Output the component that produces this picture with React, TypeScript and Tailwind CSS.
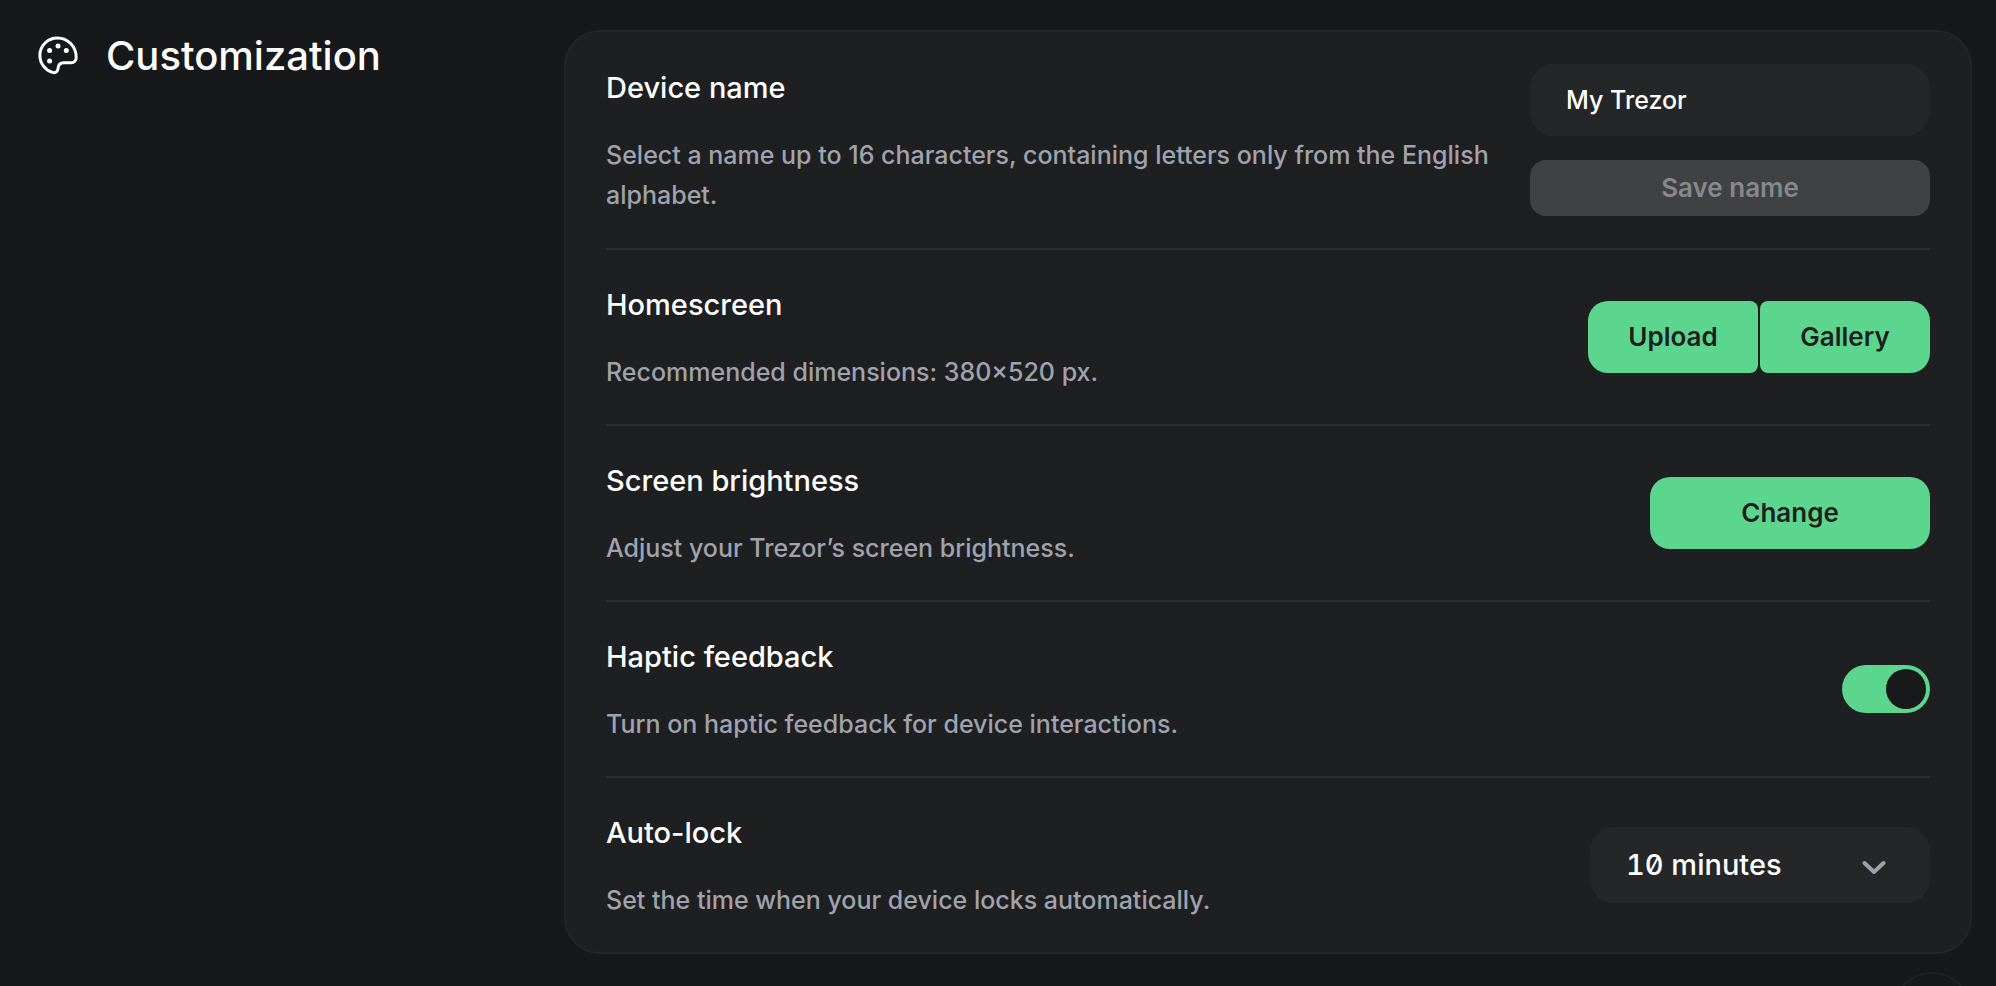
import {useState, type ReactNode} from "react";
import {clsx} from "clsx";

type RowProps = {
  title: string;
  description: string;
  htmlFor?: string;
  children: ReactNode;
};

function SettingRow({title, description, htmlFor, children}: RowProps) {
  return (
    <div className="flex items-center justify-between gap-8 py-8">
      <div className="min-w-0 flex-1">
        <h3 className="text-[29px] leading-[46px] font-medium text-white">
          {htmlFor ? <label htmlFor={htmlFor}>{title}</label> : title}
        </h3>
        <p className="mt-6 text-[25px] leading-10 font-medium text-[#a0a3ad]">{description}</p>
      </div>
      <div className="shrink-0">{children}</div>
    </div>
  );
}

function PaletteIcon() {
  return (
    <svg width="40" height="40" viewBox="0 0 40 40" fill="none" className="shrink-0" aria-hidden="true">
      <path
        d="M19.5 1.9C9.8 1.9 1.9 9.600 1.900 19.200c0 8.300 5.300 15 12.600 17.200 3.300 1 5.300-1 5.500-3.800.2-3.600 1.900-5.900 5.800-5.900h7.400c2.900 0 5-2 5-5.400C38.200 10.300 29.800 1.900 19.500 1.900Z"
        stroke="currentColor"
        strokeWidth="3"
      />
      <circle cx="11.6" cy="14.6" r="2.5" fill="currentColor" />
      <circle cx="20" cy="10" r="2.5" fill="currentColor" />
      <circle cx="28.3" cy="14.6" r="2.5" fill="currentColor" />
      <circle cx="11.6" cy="25" r="2.5" fill="currentColor" />
    </svg>
  );
}

const BUTTON = "h-[72px] bg-[#5cd68e] text-[26px] leading-8 font-semibold text-[#1d1e20] hover:bg-[#6be09b]";
const FIELD = "rounded-3xl bg-[#252628] font-medium text-white outline-none";

export default function App() {
  const [name, setName] = useState("My Trezor");
  const [haptic, setHaptic] = useState(true);
  const [autoLock, setAutoLock] = useState("10 minutes");

  return (
    <main className="relative min-h-screen overflow-hidden bg-[#171819] pt-[30px] pr-6 pb-8 pl-[38px] font-[Inter,sans-serif]">
      <div className="flex items-start">
        <header className="flex w-[526px] shrink-0 items-center gap-7 text-white">
          <PaletteIcon />
          <h2 className="text-[40px] leading-[52px] font-medium">Customization</h2>
        </header>

        <section className="min-w-0 flex-1 divide-y-2 divide-[#2c2d2f] rounded-[36px] border-2 border-[#242527] bg-[#1e1f21] px-10">
          {/* Device name */}
          <SettingRow
            title="Device name"
            description="Select a name up to 16 characters, containing letters only from the English alphabet."
            htmlFor="device-name"
          >
            <div className="flex w-[400px] flex-col gap-6">
              <input
                id="device-name"
                value={name}
                maxLength={16}
                onChange={(e) => setName(e.target.value)}
                className={clsx(FIELD, "h-[72px] w-full px-9 text-[25px]")}
              />
              <button
                disabled={name === "My Trezor"}
                className="h-14 rounded-2xl bg-[#404143] text-[26px] leading-8 font-semibold text-[#87888d]"
              >
                Save name
              </button>
            </div>
          </SettingRow>

          {/* Homescreen */}
          <SettingRow title="Homescreen" description="Recommended dimensions: 380×520 px.">
            <div className="flex gap-0.5">
              <button className={clsx(BUTTON, "w-[170px] rounded-l-[20px] rounded-r-lg")}>Upload</button>
              <button className={clsx(BUTTON, "w-[170px] rounded-l-lg rounded-r-[20px]")}>Gallery</button>
            </div>
          </SettingRow>

          {/* Brightness */}
          <SettingRow title="Screen brightness" description="Adjust your Trezor’s screen brightness.">
            <button className={clsx(BUTTON, "w-[280px] rounded-[20px]")}>Change</button>
          </SettingRow>

          {/* Haptics */}
          <SettingRow
            title="Haptic feedback"
            description="Turn on haptic feedback for device interactions."
            htmlFor="haptic"
          >
            <label
              htmlFor="haptic"
              className={clsx(
                "flex h-12 w-[88px] cursor-pointer items-center rounded-full p-1",
                haptic ? "justify-end bg-[#5cd68e]" : "justify-start bg-[#404143]"
              )}
            >
              <input
                id="haptic"
                type="checkbox"
                role="switch"
                checked={haptic}
                onChange={(e) => setHaptic(e.target.checked)}
                className="size-10 cursor-pointer appearance-none rounded-full bg-[#18191a]"
              />
            </label>
          </SettingRow>

          {/* Auto-lock */}
          <SettingRow
            title="Auto-lock"
            description="Set the time when your device locks automatically."
            htmlFor="auto-lock"
          >
            <div className="relative w-[340px]">
              <select
                id="auto-lock"
                value={autoLock}
                onChange={(e) => setAutoLock(e.target.value)}
                className={clsx(FIELD, "h-[76px] w-full appearance-none pr-20 pl-9 text-[29px] tabular-nums slashed-zero")}
              >
                <option>1 minute</option>
                <option>5 minutes</option>
                <option>10 minutes</option>
                <option>30 minutes</option>
              </select>
              <svg
                width="24"
                height="16"
                viewBox="0 0 24 16"
                fill="none"
                className="pointer-events-none absolute top-8 right-11 text-[#9da1ab]"
                aria-hidden="true"
              >
                <path d="M2.5 4 12 13l9.5-9" stroke="currentColor" strokeWidth="4" strokeLinecap="round" strokeLinejoin="round" />
              </svg>
            </div>
          </SettingRow>
        </section>
      </div>

      {/* Floating help button, mostly below the fold */}
      <button aria-label="Help" className="absolute right-6 -bottom-[66px] size-20 rounded-full border-2 border-[#1f2022] bg-[#171819]" />
    </main>
  );
}
